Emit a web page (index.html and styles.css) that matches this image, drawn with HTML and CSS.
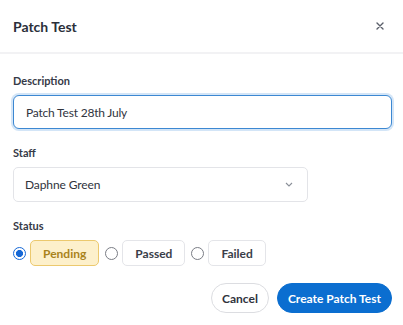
FILE: index.html
```html
<!DOCTYPE html>
<html>
<head>
  <meta charset="UTF-8">
  <title>Patch Test</title>
  <link rel="stylesheet" href="styles.css">
</head>
<body>

<div class="modal">
  <div class="modal-header">
    <h2>Patch Test</h2>
    <button class="close-btn" type="button">
      <svg width="8" height="8" viewBox="0 0 8 8"><path d="M1 1L7 7M7 1L1 7" stroke="#5a5f6a" stroke-width="1.4" stroke-linecap="round"/></svg>
    </button>
  </div>

  <div class="modal-body">
    <div class="field">
      <label for="description">Description</label>
      <input type="text" id="description" class="text-input focused" value="Patch Test 28th July">
    </div>

    <div class="field">
      <label>Staff</label>
      <div class="select">
        <span>Daphne Green</span>
        <svg width="8" height="5" viewBox="0 0 8 5"><path d="M1 1L4 4L7 1" fill="none" stroke="#8a8f98" stroke-width="1.1"/></svg>
      </div>
    </div>

    <div class="field">
      <label>Status</label>
      <div class="radio-row">
        <div class="radio-option">
          <input type="radio" name="status" checked>
          <span class="chip chip-pending">Pending</span>
        </div>
        <div class="radio-option">
          <input type="radio" name="status">
          <span class="chip">Passed</span>
        </div>
        <div class="radio-option">
          <input type="radio" name="status">
          <span class="chip">Failed</span>
        </div>
      </div>
    </div>

    <div class="actions">
      <button type="button" class="btn btn-cancel">Cancel</button>
      <button type="submit" class="btn btn-primary">Create Patch Test</button>
    </div>
  </div>
</div>

</body>
</html>
```

FILE: styles.css
```css
body {
	margin: 0;
	background: #fff;
	font-family: Lato, "Liberation Sans", sans-serif;
	color: #2f3340;
}

/* Header with title and close button */
.modal-header {
	display: flex;
	align-items: center;
	justify-content: space-between;
	height: 52px;
	padding: 0 17px 0 13px;
	border-bottom: 2px solid #f2f2f4;
}

.modal-header h2 {
	margin: 0;
	font-size: 14px;
	font-weight: 700;
	color: #2b2f3a;
}

.close-btn {
	display: flex;
	border: none;
	background: none;
	padding: 2px;
	cursor: pointer;
}

.modal-body {
	padding: 20px 11px 0 13px;
}

.field {
	margin-bottom: 17px;
}

.field label {
	display: block;
	font-size: 11px;
	line-height: 14px;
	font-weight: 700;
	color: #363a47;
	margin-bottom: 7px;
}

/* Description input - shown focused */
.text-input {
	display: block;
	width: 100%;
	box-sizing: border-box;
	height: 34px;
	padding: 0 12px;
	border: 1.5px solid #3c88d2;
	border-radius: 6px;
	box-shadow: 0 0 0 2px #d3e5f7;
	font-family: inherit;
	font-size: 12px;
	letter-spacing: -0.2px;
	color: #30343e;
	outline: none;
}

.select {
	display: flex;
	align-items: center;
	justify-content: space-between;
	width: 295px;
	height: 35px;
	box-sizing: border-box;
	padding: 0 14px 0 11px;
	border: 1px solid #e3e4e8;
	border-radius: 5px;
	font-size: 12px;
	letter-spacing: -0.1px;
	color: #2f333d;
}

/* Status radio chips */
.radio-row {
	display: flex;
	gap: 6px;
}

.radio-option {
	display: flex;
	align-items: center;
}

.radio-option input[type=radio] {
	appearance: none;
	width: 13px;
	height: 13px;
	margin: 0 4px 0 0;
	border: 1px solid #7a7d85;
	border-radius: 50%;
	box-sizing: border-box;
}

.radio-option input[type=radio]:checked {
	border: 1.5px solid #1668d6;
	background: radial-gradient(circle, #1668d6 0 3.3px, #fff 3.8px);
}

.chip {
	display: inline-flex;
	align-items: center;
	height: 26px;
	box-sizing: border-box;
	padding: 0 12px;
	border: 1px solid #e4e5e9;
	border-radius: 5px;
	font-size: 12px;
	font-weight: 700;
	color: #3a3e49;
}

.chip-pending {
	background-color: #fdf0cb;
	border-color: #ecc96e;
	color: #a9831b;
}

/* Footer buttons */
.actions {
	display: flex;
	justify-content: flex-end;
	gap: 8px;
	margin-top: 15px;
}

.btn {
	height: 30px;
	padding: 0 10px;
	border-radius: 15px;
	font-family: inherit;
	font-size: 12px;
	font-weight: 700;
	cursor: pointer;
}

.btn-cancel {
	background: #fff;
	border: 1px solid #dcdde1;
	color: #2f333d;
}

.btn-primary {
	background-color: #0b6ed0;
	border: 1px solid #0b6ed0;
	color: #fff;
}
```
